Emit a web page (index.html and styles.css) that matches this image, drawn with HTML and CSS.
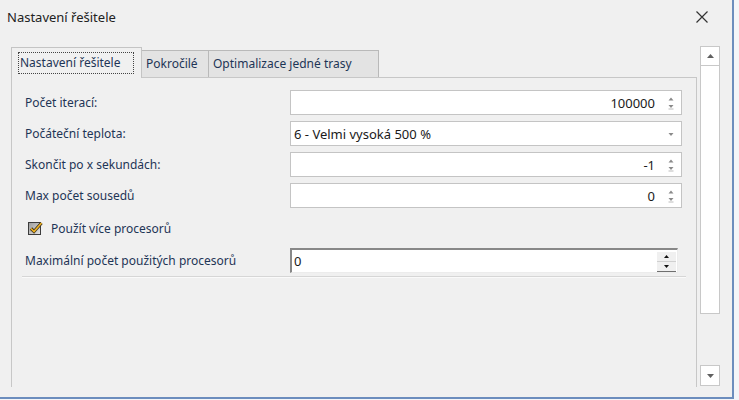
FILE: index.html
```html
<!DOCTYPE html>
<html lang="cs">
<head>
	<meta charset="UTF-8">
	<title>Nastavení řešitele</title>
	<link rel="stylesheet" href="styles.css">
</head>
<body>
	<div class="window">
		<div class="titlebar">
			<span class="title">Nastavení řešitele</span>
			<svg class="close" width="12" height="12" viewBox="0 0 12 12"><path d="M0.5 0.5 L11.5 11.5 M11.5 0.5 L0.5 11.5" stroke="#333" stroke-width="1.2" fill="none"/></svg>
		</div>
		<div class="main">
			<div class="tabs">
				<div class="tabstrip">
					<div class="tab active"><span class="focus">Nastavení řešitele</span></div>
					<div class="tab t2">Pokročilé</div>
					<div class="tab t3">Optimalizace jedné trasy</div>
				</div>
				<div class="pane">
					<div class="row">
						<label>Počet iterací:</label>
						<div class="field num">
							<span class="val">100000</span>
							<svg class="spin" width="8" height="16" viewBox="0 0 8 16"><path d="M4 2.5 L6.5 5.5 L1.5 5.5 Z M1.5 10 L6.5 10 L4 13 Z" fill="#8a8a8a"/><path d="M1.5 14 L6.5 14" stroke="#bbb" stroke-width="1"/></svg>
						</div>
					</div>
					<div class="row">
						<label>Počáteční teplota:</label>
						<div class="field combo">
							<span class="val">6 - Velmi vysoká 500 %</span>
							<svg class="spin" width="8" height="16" viewBox="0 0 8 16"><path d="M1.5 7 L6.5 7 L4 10 Z" fill="#8a8a8a"/></svg>
						</div>
					</div>
					<div class="row">
						<label>Skončit po x sekundách:</label>
						<div class="field num">
							<span class="val">-1</span>
							<svg class="spin" width="8" height="16" viewBox="0 0 8 16"><path d="M4 2.5 L6.5 5.5 L1.5 5.5 Z M1.5 10 L6.5 10 L4 13 Z" fill="#8a8a8a"/><path d="M1.5 14 L6.5 14" stroke="#bbb" stroke-width="1"/></svg>
						</div>
					</div>
					<div class="row">
						<label>Max počet sousedů</label>
						<div class="field num">
							<span class="val">0</span>
							<svg class="spin" width="8" height="16" viewBox="0 0 8 16"><path d="M4 2.5 L6.5 5.5 L1.5 5.5 Z M1.5 10 L6.5 10 L4 13 Z" fill="#8a8a8a"/><path d="M1.5 14 L6.5 14" stroke="#bbb" stroke-width="1"/></svg>
						</div>
					</div>
					<div class="checkrow">
						<svg class="check" width="17" height="15" viewBox="0 0 17 15">
							<defs><linearGradient id="cg" x1="0" y1="0" x2="1" y2="1"><stop offset="0" stop-color="#9a9a9a"/><stop offset="1" stop-color="#e6e6e6"/></linearGradient></defs>
							<rect x="0.5" y="1.5" width="12" height="12" fill="url(#cg)" stroke="#3c3c3c"/>
							<path d="M3 7.5 L6 10.5 L13.5 2" stroke="#3a3020" stroke-width="3.2" fill="none"/>
							<path d="M3 7.5 L6 10.5 L13.5 2" stroke="#f0b422" stroke-width="1.6" fill="none"/>
						</svg>
						<span>Použít více procesorů</span>
					</div>
					<div class="row">
						<label>Maximální počet použitých procesorů</label>
						<div class="field sunken">
							<span class="val">0</span>
							<div class="updown">
								<div class="ud"><svg width="5" height="3" viewBox="0 0 5 3"><path d="M2.5 0 L5 3 L0 3 Z" fill="#111"/></svg></div>
								<div class="ud dn"><svg width="5" height="3" viewBox="0 0 5 3"><path d="M0 0 L5 0 L2.5 3 Z" fill="#111"/></svg></div>
							</div>
						</div>
					</div>
					<div class="sep"></div>
				</div>
			</div>
			<div class="vscroll">
				<div class="sbtn"><svg width="7" height="4" viewBox="0 0 7 4"><path d="M3.5 0 L7 4 L0 4 Z" fill="#606060"/></svg></div>
				<div class="thumb"></div>
				<div class="track"></div>
				<div class="sbtn down"><svg width="7" height="4" viewBox="0 0 7 4"><path d="M0 0 L7 0 L3.5 4 Z" fill="#606060"/></svg></div>
			</div>
		</div>
	</div>
</body>
</html>
```

FILE: styles.css
```css
*{
	margin: 0;
	padding: 0;
	box-sizing: border-box;
}
body{
	background: #f3f5f8;
	font-family: "Segoe UI", "Noto Sans", sans-serif;
	font-size: 12px;
}
.window{
	width: 734px;
	height: 399px;
	background: #f0f0f0;
	border-right: 2px solid #6c8dbd;
	border-bottom: 2px solid #6c8dbd;
	overflow: hidden;
}
.titlebar{
	height: 32px;
	display: flex;
	align-items: center;
	justify-content: space-between;
	padding: 0 24px 0 7px;
	color: #222;
}
.title{
	margin-top: 1px;
	font-size: 13px;
}
.close{
	margin-top: 1px;
}
.main{
	display: flex;
	padding-left: 11px;
}
.tabs{
	width: 686px;
	padding-top: 15px;
}
.tabstrip{
	height: 30px;
	display: flex;
	align-items: flex-end;
}
.tab{
	height: 27px;
	border: 1px solid #b9b9b9;
	border-bottom: none;
	border-left: none;
	background: #e3e3e3;
	color: #1e3556;
	line-height: 26px;
	padding-left: 4px;
	white-space: nowrap;
}
.tab.active{
	width: 131px;
	height: 31px;
	margin-bottom: -1px;
	position: relative;
	z-index: 1;
	background: #f0f0f0;
	border-left: 1px solid #c4c4c4;
	border-color: #c4c4c4;
	padding: 4px 0 0 6px;
	line-height: normal;
}
.focus{
	display: block;
	width: 116px;
	height: 22px;
	border: 1px dotted #444;
	line-height: 19px;
	padding-left: 1px;
}
.t2{
	width: 67px;
}
.t3{
	width: 170px;
}
.pane{
	height: 310px;
	border: 1px solid #c7c7c7;
	border-bottom: none;
	padding: 12px 13px 0 13px;
}
.row{
	display: flex;
	align-items: center;
	height: 25px;
	margin-bottom: 6px;
}
.row label{
	width: 265px;
	color: #1e3556;
}
.field{
	width: 392px;
	height: 25px;
	background: #fff;
	border: 1px solid #c4c4c4;
	display: flex;
	align-items: center;
	color: #1a1a1a;
	font-size: 13px;
}
.field .val{
	flex: 1;
	padding-left: 3px;
}
.field.num .val{
	text-align: right;
	padding-right: 12px;
}
.field .spin{
	margin-right: 6px;
}
.checkrow{
	height: 28px;
	display: flex;
	align-items: center;
	padding-left: 3px;
	color: #1e3556;
	margin-bottom: 6px;
}
.checkrow .check{
	margin-right: 6px;
}
.field.sunken{
	width: 388px;
	border-top: 2px solid #888;
	border-left: 2px solid #888;
	border-right: 1px solid #ececec;
	border-bottom: 1px solid #ececec;
	padding-right: 1px;
}
.field.sunken .val{
	padding-left: 2px;
}
.updown{
	width: 19px;
	height: 21px;
	display: flex;
	flex-direction: column;
}
.ud{
	flex: 1;
	background: #f0f0f0;
	display: flex;
	align-items: center;
	justify-content: center;
	border-top: 1px solid #fff;
}
.ud.dn{
	border-top: 1px solid #d0d0d0;
	border-bottom: 1px solid #6f6f6f;
}
.sep{
	height: 2px;
	background: #d6d6d6;
	border-bottom: 1px solid #fafafa;
	margin: -3px -3px 0 -3px;
}
.vscroll{
	width: 20px;
	margin-left: 3px;
	margin-top: 14px;
	height: 340px;
	display: flex;
	flex-direction: column;
}
.sbtn{
	height: 20px;
	background: #fff;
	border: 1px solid #c8c8c8;
	display: flex;
	align-items: center;
	justify-content: center;
}
.sbtn.down{
	height: 21px;
}
.thumb{
	height: 248px;
	background: #fff;
	border: 1px solid #c8c8c8;
	border-top: none;
}
.track{
	flex: 1;
}
```
